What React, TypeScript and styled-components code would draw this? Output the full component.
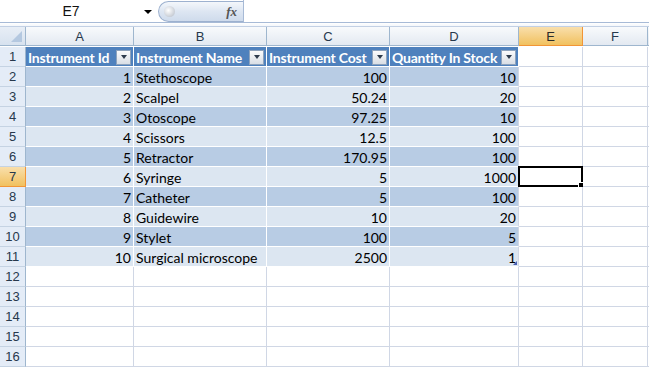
import React from "react"
import styled, { createGlobalStyle, css } from "styled-components"

const GlobalStyle = createGlobalStyle`
  html, body {
    margin: 0;
    padding: 0;
    background: #fff;
    overflow: hidden;
  }
  body {
    font-family: Lato, "Liberation Sans", sans-serif;
    font-size: 14px;
    color: #000;
  }
`

const Page = styled.div`
  width: 649px;
  height: 369px;
  overflow: hidden;
  background: #fff;
`

const FormulaBar = styled.div`
  display: flex;
  align-items: stretch;
  height: 22px;
  border-bottom: 1px solid #a7bad6;
`

const NameBox = styled.div`
  position: relative;
  width: 158px;
  display: flex;
  align-items: center;
  justify-content: center;
  padding-right: 16px;
  box-sizing: border-box;
  font-family: "Liberation Sans", Arial, sans-serif;
  font-size: 14px;
  color: #111;
`

const DropArrow = styled.span`
  position: absolute;
  right: 6px;
  top: 10px;
  width: 0;
  height: 0;
  border-left: 4px solid transparent;
  border-right: 4px solid transparent;
  border-top: 4px solid #000;
`

const Pill = styled.div`
  position: relative;
  width: 85px;
  margin-top: 1px;
  height: 21px;
  border-radius: 11px 0 0 11px;
  border: 1px solid #9db1cf;
  border-right: none;
  box-sizing: border-box;
  background: linear-gradient(#f4f7fb, #dde6f2 50%, #cfdbec);
  display: flex;
  align-items: center;
  justify-content: flex-end;
  padding-right: 6px;
`

const Knob = styled.span`
  position: absolute;
  left: 5px;
  top: 4px;
  width: 11px;
  height: 11px;
  border-radius: 50%;
  background: radial-gradient(circle at 40% 40%, #fff, #c9ced6 70%, #aab2bd);
`

const Fx = styled.span`
  font-family: "Liberation Serif", serif;
  font-style: italic;
  font-weight: bold;
  font-size: 13px;
  color: #555;
`

const FormulaInput = styled.div`
  flex: 1;
  border-left: 1px solid #a7bad6;
  background: #fff;
`

const Spacer = styled.div`
  height: 3px;
  border-bottom: 1px solid #c2d0e4;
  background: linear-gradient(#fff, #f3f6fa);
`

const Grid = styled.div`
  display: grid;
  grid-template-columns: 26px 108px 133px 123px 129px 64px 65px 10px;
  grid-auto-rows: 20px;
`

const ColHead = styled.div<{ $sel?: boolean }>`
  box-sizing: border-box;
  border-right: 1px solid #9eb6ce;
  border-bottom: 1px solid #9eb6ce;
  background: linear-gradient(#f8fafc, #e3e9f1);
  display: flex;
  align-items: center;
  justify-content: center;
  font-family: "Liberation Sans", Arial, sans-serif;
  font-size: 13px;
  color: #27384c;
  height: 19px;
  ${p =>
    p.$sel &&
    css`
      background: linear-gradient(#f9dfac, #f1c15f);
      border-right-color: #f29536;
      border-bottom: 1px solid #f29536;
      color: #2b2b2b;
    `}
`

const Corner = styled.div`
  box-sizing: border-box;
  height: 19px;
  border-right: 1px solid #9eb6ce;
  border-bottom: 1px solid #9eb6ce;
  background: linear-gradient(#e8eef6, #d7e2ef);
  position: relative;
  &::after {
    content: "";
    position: absolute;
    right: 3px;
    bottom: 3px;
    width: 0;
    height: 0;
    border-left: 11px solid transparent;
    border-bottom: 11px solid #b4c8e0;
  }
`

const HeadRow = styled.div`
  display: contents;
`

const RowHead = styled.div<{ $sel?: boolean }>`
  box-sizing: border-box;
  border-right: 1px solid #9eb6ce;
  border-bottom: 1px solid #c5d3e3;
  background: #e4ecf7;
  display: flex;
  align-items: center;
  justify-content: center;
  font-family: "Liberation Sans", Arial, sans-serif;
  font-size: 13px;
  color: #27384c;
  ${p =>
    p.$sel &&
    css`
      background: linear-gradient(#f9dfac, #f1c15f);
      border-right-color: #f29536;
      border-bottom-color: #f29536;
    `}
`

type Tone = "head" | "dark" | "light" | "none"

const toneBg: Record<Tone, string> = {
  head: "#4f81bd",
  dark: "#b8cce4",
  light: "#dce6f1",
  none: "#fff",
}

const Cell = styled.div<{ $tone: Tone; $num?: boolean; $last?: boolean }>`
  position: relative;
  box-sizing: border-box;
  background: ${p => toneBg[p.$tone]};
  border-right: 1px solid ${p => (p.$tone === "none" ? "#d0d7e5" : "#fff")};
  border-bottom: 1px solid ${p => (p.$tone === "none" ? "#d0d7e5" : "#fff")};
  display: flex;
  align-items: center;
  justify-content: ${p => (p.$num ? "flex-end" : "flex-start")};
  padding: 1px 2px 0 2px;
  white-space: nowrap;
  color: ${p => (p.$tone === "head" ? "#fff" : "#000")};
  font-weight: ${p => (p.$tone === "head" ? "bold" : "normal")};
  letter-spacing: ${p => (p.$tone === "head" ? "-0.2px" : "0")};
  ${p =>
    p.$last &&
    css`
      border-right-color: #d0d7e5;
    `}
`

const FilterBtn = styled.span`
  margin-left: auto;
  width: 15px;
  height: 15px;
  box-sizing: border-box;
  border: 1px solid #8ea3bd;
  background: linear-gradient(#fbfbfc, #d9dee5);
  display: flex;
  align-items: center;
  justify-content: center;
  flex-shrink: 0;
  &::before {
    content: "";
    width: 0;
    height: 0;
    border-left: 3.5px solid transparent;
    border-right: 3.5px solid transparent;
    border-top: 4px solid #2e3b4d;
  }
`

const Selected = styled.div`
  position: absolute;
  inset: -1px -1px -1px -1px;
  border: 2px solid #000;
  box-sizing: border-box;
  &::after {
    content: "";
    position: absolute;
    right: -4px;
    bottom: -4px;
    width: 5px;
    height: 5px;
    background: #000;
    border: 1px solid #fff;
  }
`

const ResizeHandle = styled.span`
  position: absolute;
  right: 1px;
  bottom: 1px;
  width: 0;
  height: 0;
  border-left: 4px solid transparent;
  border-bottom: 4px solid #4a5fb0;
`

const headers = ["Instrument Id", "Instrument Name", "Instrument Cost", "Quantity In Stock"]

const rows: [number, string, string, number][] = [
  [1, "Stethoscope", "100", 10],
  [2, "Scalpel", "50.24", 20],
  [3, "Otoscope", "97.25", 10],
  [4, "Scissors", "12.5", 100],
  [5, "Retractor", "170.95", 100],
  [6, "Syringe", "5", 1000],
  [7, "Catheter", "5", 100],
  [8, "Guidewire", "10", 20],
  [9, "Stylet", "100", 5],
  [10, "Surgical microscope", "2500", 1],
]

const letters = ["A", "B", "C", "D", "E", "F"]

export default function App() {
  return (
    <Page>
      <GlobalStyle />
      <FormulaBar>
        <NameBox>
          E7
          <DropArrow />
        </NameBox>
        <Pill>
          <Knob />
          <Fx>fx</Fx>
        </Pill>
        <FormulaInput />
      </FormulaBar>
      <Spacer />
      <Grid>
        <HeadRow>
          <Corner />
          {letters.map(l => (
            <ColHead key={l} $sel={l === "E"}>
              {l}
            </ColHead>
          ))}
          <ColHead />
        </HeadRow>

        <RowHead>1</RowHead>
        {headers.map(h => (
          <Cell key={h} $tone="head">
            {h}
            <FilterBtn />
          </Cell>
        ))}
        <Cell $tone="none" />
        <Cell $tone="none" />
        <Cell $tone="none" />

        {rows.map((r, i) => {
          const tone: Tone = i % 2 === 0 ? "dark" : "light"
          const rowNum = i + 2
          const isLast = i === rows.length - 1
          return (
            <React.Fragment key={rowNum}>
              <RowHead $sel={rowNum === 7}>{rowNum}</RowHead>
              <Cell $tone={tone} $num>
                {r[0]}
              </Cell>
              <Cell $tone={tone}>{r[1]}</Cell>
              <Cell $tone={tone} $num>
                {r[2]}
              </Cell>
              <Cell $tone={tone} $num $last>
                {r[3]}
                {isLast && <ResizeHandle />}
              </Cell>
              <Cell $tone="none">{rowNum === 7 && <Selected />}</Cell>
              <Cell $tone="none" />
              <Cell $tone="none" />
            </React.Fragment>
          )
        })}

        {[12, 13, 14, 15, 16].map(n => (
          <React.Fragment key={n}>
            <RowHead>{n}</RowHead>
            {[0, 1, 2, 3, 4, 5, 6].map(c => (
              <Cell key={c} $tone="none" />
            ))}
          </React.Fragment>
        ))}
      </Grid>
    </Page>
  )
}
